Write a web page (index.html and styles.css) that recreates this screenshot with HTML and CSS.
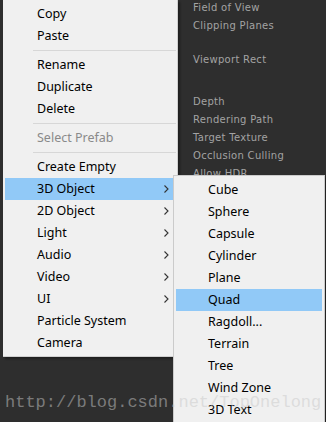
FILE: index.html
```html
<!doctype html>
<html lang="en">
<head>
    <meta charset="UTF-8">
    <title>Hierarchy context menu</title>
    <link rel="stylesheet" href="styles.css">
</head>
<body>
<div class="stage">
    <!-- inspector labels behind the menus -->
    <ul class="inspector">
        <li>Field of View</li>
        <li>Clipping Planes</li>
        <li class="gap-lg">Viewport Rect</li>
        <li class="gap-xl">Depth</li>
        <li>Rendering Path</li>
        <li>Target Texture</li>
        <li>Occlusion Culling</li>
        <li>Allow HDR</li>
    </ul>

    <ul class="menu main-menu">
        <li class="item">Copy</li>
        <li class="item">Paste</li>
        <li class="sep"></li>
        <li class="item">Rename</li>
        <li class="item">Duplicate</li>
        <li class="item">Delete</li>
        <li class="sep"></li>
        <li class="item disabled">Select Prefab</li>
        <li class="sep"></li>
        <li class="item">Create Empty</li>
        <li class="item active">3D Object<svg class="chev" width="5" height="8" viewBox="0 0 5 8"><path d="M0.5 0.5 L4 4 L0.5 7.5" fill="none" stroke="#333" stroke-width="1.1"/></svg></li>
        <li class="item">2D Object<svg class="chev" width="5" height="8" viewBox="0 0 5 8"><path d="M0.5 0.5 L4 4 L0.5 7.5" fill="none" stroke="#333" stroke-width="1.1"/></svg></li>
        <li class="item">Light<svg class="chev" width="5" height="8" viewBox="0 0 5 8"><path d="M0.5 0.5 L4 4 L0.5 7.5" fill="none" stroke="#333" stroke-width="1.1"/></svg></li>
        <li class="item">Audio<svg class="chev" width="5" height="8" viewBox="0 0 5 8"><path d="M0.5 0.5 L4 4 L0.5 7.5" fill="none" stroke="#333" stroke-width="1.1"/></svg></li>
        <li class="item">Video<svg class="chev" width="5" height="8" viewBox="0 0 5 8"><path d="M0.5 0.5 L4 4 L0.5 7.5" fill="none" stroke="#333" stroke-width="1.1"/></svg></li>
        <li class="item">UI<svg class="chev" width="5" height="8" viewBox="0 0 5 8"><path d="M0.5 0.5 L4 4 L0.5 7.5" fill="none" stroke="#333" stroke-width="1.1"/></svg></li>
        <li class="item">Particle System</li>
        <li class="item">Camera</li>
    </ul>

    <ul class="menu sub-menu">
        <li class="item">Cube</li>
        <li class="item">Sphere</li>
        <li class="item">Capsule</li>
        <li class="item">Cylinder</li>
        <li class="item">Plane</li>
        <li class="item active">Quad</li>
        <li class="item">Ragdoll...</li>
        <li class="item">Terrain</li>
        <li class="item">Tree</li>
        <li class="item">Wind Zone</li>
        <li class="item">3D Text</li>
    </ul>

    <div class="watermark">http://blog.csdn.net/TopOnelong</div>
</div>
</body>
</html>
```

FILE: styles.css
```css
*{
    box-sizing: border-box;
}
html, body{
    margin: 0;
    padding: 0;
    background: #2e2e2e;
}
body{
    width: 326px;
    height: 422px;
    overflow: hidden;
}
.stage{
    position: relative;
    width: 326px;
    height: 422px;
    overflow: hidden;
}
ul{
    list-style: none;
    margin: 0;
    padding: 0;
}

/* inspector */
.inspector{
    padding: 0 0 0 193px;
    margin-top: -1px;
    font-family: "DejaVu Sans", sans-serif;
    font-size: 10px;
    color: #a3a3a3;
    letter-spacing: 0.3px;
}
.inspector li{
    height: 18px;
    line-height: 18px;
}
.inspector .gap-lg{
    margin-top: 16px;
}
.inspector .gap-xl{
    margin-top: 24px;
}

/* menus */
.menu{
    position: absolute;
    background: #f0f0f0;
    font-family: "Noto Sans", "Liberation Sans", sans-serif;
    font-size: 12.5px;
    color: #000;
}
.main-menu{
    left: 3px;
    top: 0;
    width: 175px;
    height: 357px;
    padding-top: 3px;
    border-right: 1px solid #cfcfcf;
    border-bottom: 1px solid #cfcfcf;
    box-shadow: 2px 2px 2px rgba(0,0,0,0.35);
}
.sub-menu{
    left: 173px;
    top: 175px;
    width: 152px;
    height: 260px;
    padding-top: 3px;
    border: 1px solid #cbcbcb;
    box-shadow: 2px 2px 2px rgba(0,0,0,0.3);
}
.item{
    height: 22px;
    line-height: 22px;
    margin: 0 2px;
    padding-left: 32px;
    display: flex;
    align-items: center;
}
.item.active{
    background: #91c9f7;
}
.item.disabled{
    color: #8a8a8a;
}
.chev{
    margin-left: auto;
    margin-right: 6px;
}
.sep{
    height: 7px;
    margin-left: 30px;
    margin-right: 1px;
    padding-top: 3px;
}
.sep::after{
    content: "";
    display: block;
    height: 1px;
    background: #d7d7d7;
}

.watermark{
    position: absolute;
    left: 5px;
    top: 393px;
    font-family: "Liberation Mono", monospace;
    font-size: 17px;
    color: rgba(200,200,200,0.5);
    white-space: nowrap;
}
```
